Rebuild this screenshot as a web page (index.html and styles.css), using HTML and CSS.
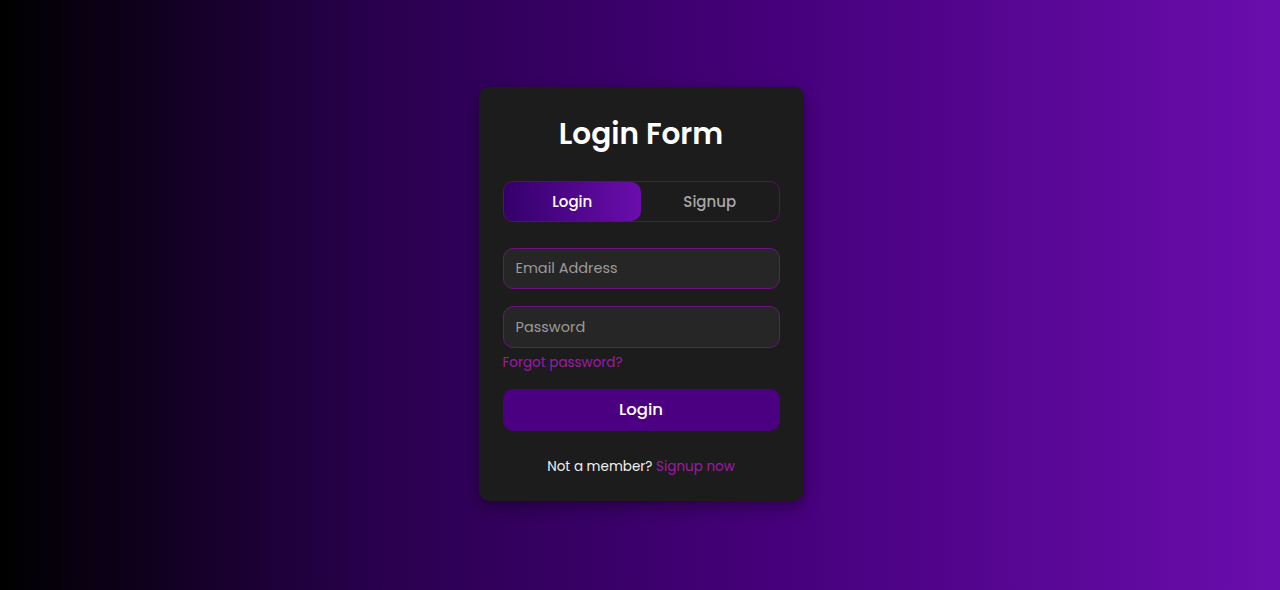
FILE: index.html
```html
<!DOCTYPE html>
<html lang="en">
<head>
<meta charset="utf-8">
<title>Login Form</title>
<link rel="stylesheet" href="styles.css">
</head>
<body>
  <main class="page">
    <section class="card">
      <h1 class="title">Login Form</h1>
      <div class="tabs">
        <button class="tab tab-active" type="button">Login</button>
        <button class="tab" type="button">Signup</button>
      </div>
      <form class="form">
        <input class="field field-email" type="email" placeholder="Email Address">
        <input class="field field-pass" type="password" placeholder="Password">
        <a class="forgot" href="#">Forgot password?</a>
        <button class="submit" type="button">Login</button>
      </form>
      <p class="footer-text">Not a member? <a class="signup-link" href="#">Signup now</a></p>
    </section>
  </main>
</body>
</html>
```
FILE: styles.css
```css
* {
  box-sizing: border-box;
}

html, body {
  margin: 0;
  padding: 0;
}

body {
  font-family: "Poppins", "Inter", "Open Sans", sans-serif;
  background: linear-gradient(to right, #000000 0%, #2a004f 30%, #45007a 60%, #6a0dad 100%);
  min-height: 100vh;
}

.page {
  min-height: 100vh;
  display: flex;
  align-items: center;
  justify-content: center;
  padding-left: 2px;
  padding-bottom: 2px;
}

.card {
  width: 325px;
  background: #1c1c1c;
  border-radius: 10px;
  padding: 24px 24px 26px;
  box-shadow: 0 6px 16px rgba(0, 0, 0, 0.35);
}

.title {
  margin: 0;
  color: #ffffff;
  font-size: 29.5px;
  font-weight: 600;
  line-height: 45px;
  text-align: center;
}

.tabs {
  margin-top: 25px;
  height: 41px;
  display: flex;
  border: 1px solid #5a0e6d;
  border-radius: 10px;
  overflow: hidden;
}

.tab {
  flex: 1;
  border: none;
  background: transparent;
  color: #a8a8a8;
  font-family: inherit;
  font-size: 15px;
  font-weight: 500;
  padding: 0;
  cursor: pointer;
}

.tab-active {
  color: #ffffff;
  background: linear-gradient(to right, #34006a, #6a0dad);
  border-radius: 10px;
}

.form {
  display: flex;
  flex-direction: column;
  margin-top: 26px;
}

.field {
  height: 41px;
  width: 100%;
  background: #262626;
  border: 1px solid #6c1283;
  border-radius: 10px;
  padding: 0 12px;
  color: #ffffff;
  font-family: inherit;
  font-size: 14.5px;
  outline: none;
}

.field::placeholder {
  color: #9a9a9a;
}

.field-pass {
  margin-top: 17px;
  height: 42px;
}

.forgot {
  margin-top: 6px;
  color: #9d1aa9;
  font-size: 13.5px;
  line-height: 17px;
  text-decoration: none;
  align-self: flex-start;
}

.submit {
  margin-top: 18px;
  height: 42px;
  border: none;
  border-radius: 10px;
  background: #4b0082;
  color: #ffffff;
  font-family: inherit;
  font-size: 16.5px;
  font-weight: 500;
  padding: 0 0 1px;
  cursor: pointer;
}

.footer-text {
  margin: 27px 0 0;
  text-align: center;
  color: #f0f0f0;
  font-size: 13.5px;
  line-height: 17px;
}

.signup-link {
  color: #9d1aa9;
  text-decoration: none;
}
```
